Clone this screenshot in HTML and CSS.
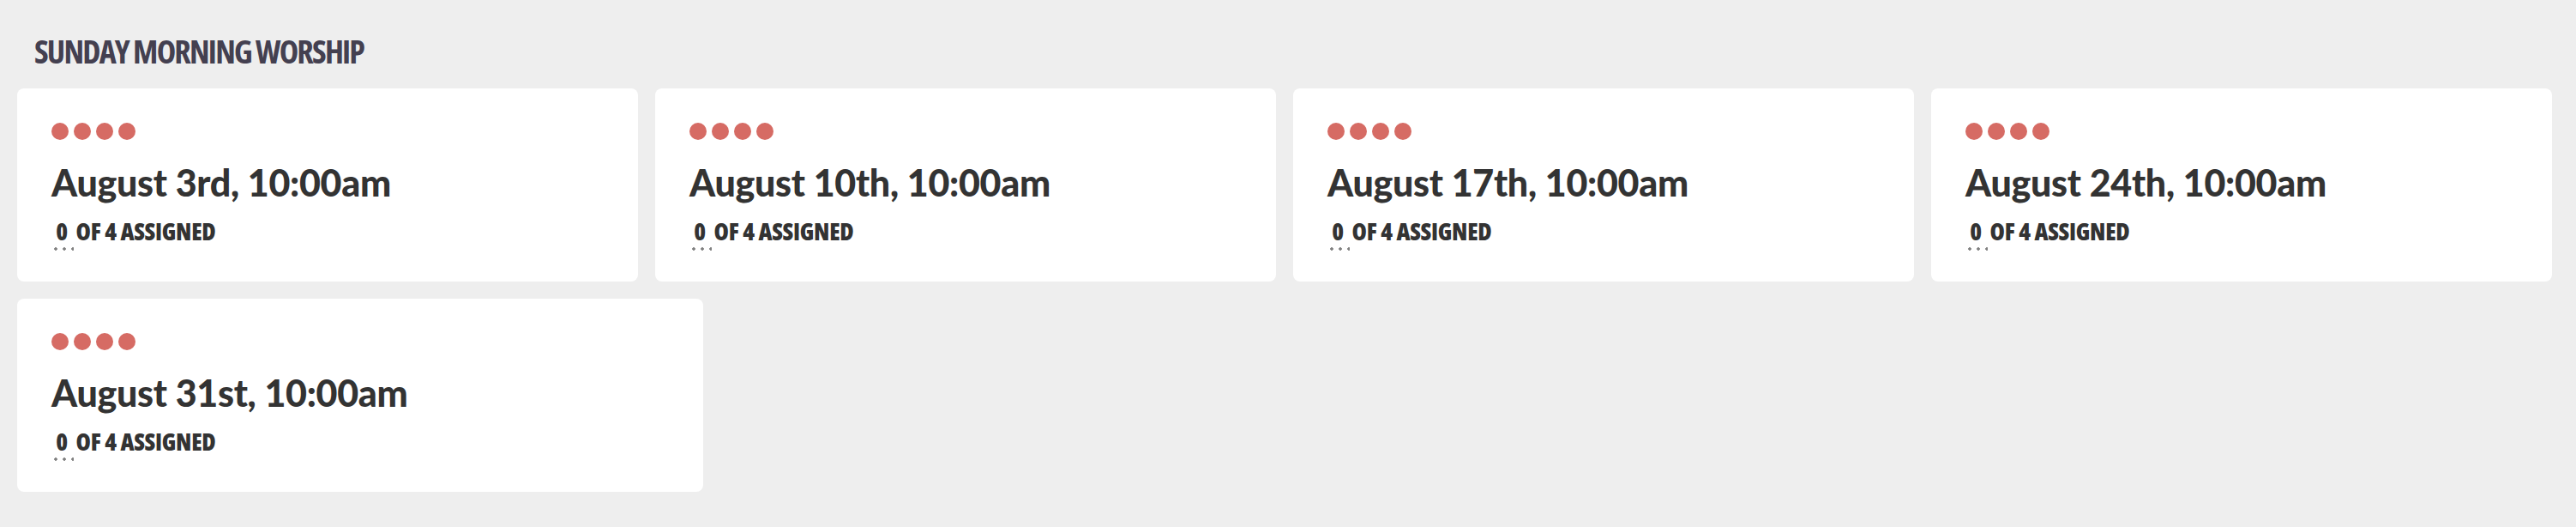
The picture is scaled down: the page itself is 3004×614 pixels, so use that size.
FILE: index.html
```html
<!DOCTYPE html>
<html lang="en">
<head>
    <meta charset="UTF-8">
    <meta name="viewport" content="width=device-width, initial-scale=1.0">
    <title>Sunday Morning Worship</title>
    <link rel="stylesheet" href="styles.css">
</head>
<body>

    <!-- Service group -->
    <section class="group">
        <h2 class="group-title">SUNDAY MORNING WORSHIP</h2>

        <div class="plans">
            <div class="plan">
                <div class="slots"><span></span><span></span><span></span><span></span></div>
                <h3>August 3rd, 10:00am</h3>
                <p class="assigned"><span class="count">0</span> OF 4 ASSIGNED</p>
            </div>
            <div class="plan">
                <div class="slots"><span></span><span></span><span></span><span></span></div>
                <h3>August 10th, 10:00am</h3>
                <p class="assigned"><span class="count">0</span> OF 4 ASSIGNED</p>
            </div>
            <div class="plan">
                <div class="slots"><span></span><span></span><span></span><span></span></div>
                <h3>August 17th, 10:00am</h3>
                <p class="assigned"><span class="count">0</span> OF 4 ASSIGNED</p>
            </div>
            <div class="plan">
                <div class="slots"><span></span><span></span><span></span><span></span></div>
                <h3>August 24th, 10:00am</h3>
                <p class="assigned"><span class="count">0</span> OF 4 ASSIGNED</p>
            </div>
            <div class="plan">
                <div class="slots"><span></span><span></span><span></span><span></span></div>
                <h3>August 31st, 10:00am</h3>
                <p class="assigned"><span class="count">0</span> OF 4 ASSIGNED</p>
            </div>
        </div>
    </section>

</body>
</html>
```
FILE: styles.css
```css
body {
    margin: 0;
    background-color: #eeeeee;
    font-family: Lato, "Open Sans", sans-serif;
    color: #333333;
}
.group {
    padding: 40px 28px 41px 20px;
}
.group-title {
    margin: 0 0 25px 20px;
    font-family: "Open Sans", sans-serif;
    font-stretch: 75%;
    font-weight: 720;
    font-size: 38px;
    line-height: 38px;
    letter-spacing: -1.8px;
    color: #444050;
}
.plans {
    display: flex;
    flex-wrap: wrap;
    gap: 20px;
}
.plan {
    flex: 1 1 600px;
    max-width: 800px;
    box-sizing: border-box;
    height: 225px;
    padding: 40px 40px 0;
    background-color: white;
    border-radius: 8px;
}
.slots {
    display: flex;
    gap: 6px;
}
.slots span {
    width: 20px;
    height: 20px;
    border-radius: 50%;
    background-color: #d66b64;
}
.plan h3 {
    margin: 24px 0 0;
    font-family: Lato, sans-serif;
    font-weight: 900;
    font-size: 43px;
    line-height: 52px;
    letter-spacing: -0.3px;
    color: #333333;
}
.assigned {
    margin: 16px 0 0;
    font-family: "Open Sans", sans-serif;
    font-stretch: 75%;
    font-weight: 800;
    font-size: 28px;
    line-height: 28px;
    letter-spacing: -0.3px;
    color: #333333;
}
.count {
    position: relative;
    display: inline-block;
    width: 24px;
    text-align: center;
}
.count::after {
    content: "";
    position: absolute;
    left: 0;
    top: 33px;
    width: 26px;
    height: 4px;
    background: radial-gradient(circle, #808080 1.5px, transparent 2px) 0 0 / 10px 4px repeat-x;
}
```
